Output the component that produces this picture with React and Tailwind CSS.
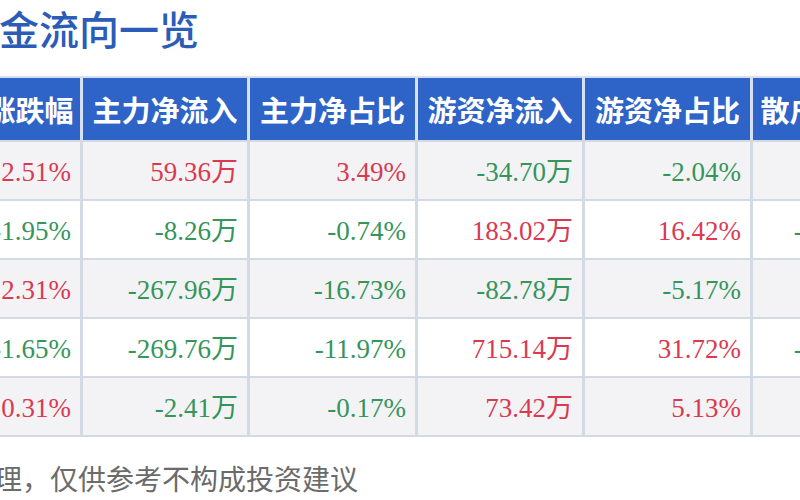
const RED = "text-[#d93a50]";
const GREEN = "text-[#35955a]";

const headers = ["涨跌幅", "主力净流入", "主力净占比", "游资净流入", "游资净占比", "散户净流入"];

const rows = [
  ["2.51%", "59.36万", "3.49%", "-34.70万", "-2.04%", "-24.66万"],
  ["-1.95%", "-8.26万", "-0.74%", "183.02万", "16.42%", "-174.76万"],
  ["2.31%", "-267.96万", "-16.73%", "-82.78万", "-5.17%", "350.74万"],
  ["-1.65%", "-269.76万", "-11.97%", "715.14万", "31.72%", "-445.38万"],
  ["0.31%", "-2.41万", "-0.17%", "73.42万", "5.13%", "-71.01万"],
];

const cols = "grid grid-cols-[100px_164px_165px_164px_165px_160px] gap-x-[3px]";

function Cell({ value, shade }) {
  const color = value.startsWith("-") ? GREEN : RED;
  return (
    <div
      className={`flex items-center justify-end pr-[9px] pt-[4px] whitespace-nowrap text-[27px] leading-none ${color} ${
        shade ? "bg-[#f3f3f5]" : "bg-white"
      }`}
      style={{ fontFamily: '"Liberation Serif", "Noto Sans CJK SC", serif' }}
    >
      {value}
    </div>
  );
}

export default function App() {
  return (
    <div
      className="relative w-[800px] h-[500px] overflow-hidden bg-white"
      style={{ fontFamily: '"Noto Sans CJK SC", "Noto Sans", sans-serif' }}
    >
      <div className="pt-[8px] h-[48px]">
        <h1 className="text-[40px] leading-none font-medium text-[#2a5cb8] -ml-[1px] whitespace-nowrap">
          金流向一览
        </h1>
      </div>

      <div className="mt-[28px] -ml-[20px] w-[940px] border-t-2 border-[#d6dff2]">
        <div className={`${cols} h-[62px] bg-[#d9e2f4]`}>
          {headers.map((h) => (
            <div
              key={h}
              className="flex items-center justify-center bg-[#2e63c7] text-white text-[29px] font-bold leading-none whitespace-nowrap"
            >
              {h}
            </div>
          ))}
        </div>
        <div className="bg-[#d4dae3] flex flex-col gap-y-[2px] pt-[2px] pb-[2px]">
          {rows.map((r, i) => (
            <div key={i} className={`${cols} h-[57px]`}>
              {r.map((v, j) => (
                <Cell key={j} value={v} shade={i % 2 === 0} />
              ))}
            </div>
          ))}
        </div>
      </div>

      <p className="mt-[27px] -ml-[6px] text-[28px] leading-none text-[#6b6b6b] whitespace-nowrap">
        理，仅供参考不构成投资建议
      </p>
    </div>
  );
}
